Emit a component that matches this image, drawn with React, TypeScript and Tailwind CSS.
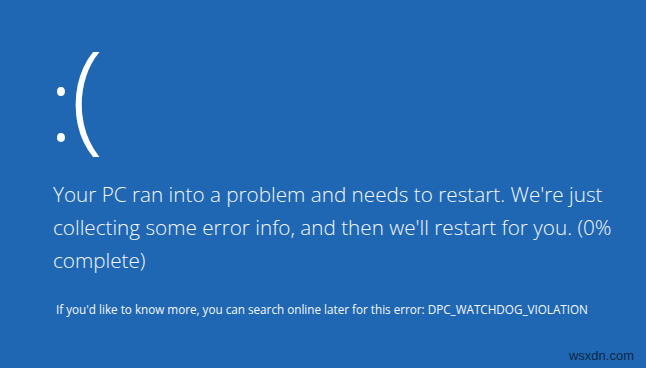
import React from "react";

const App = () => {
  return (
    <main className="relative h-[368px] w-[646px] overflow-hidden bg-[#2067b3] text-white">
      <div className="flex flex-col pl-[53px]">
        <div className="mt-[32px] flex h-[128px] items-center font-['Open_Sans',sans-serif] font-light leading-none">
          <span className="-ml-[4px] mt-[12px] text-[100px]">:</span>
          <span className="-ml-[2px] -mt-[8px] text-[120px]">(</span>
        </div>
        <p className="mt-[18px] font-['Open_Sans',sans-serif] text-[20.7px] font-light leading-[33px] text-[#f4f7fb]">
          <span className="block whitespace-nowrap">Your PC ran into a problem and needs to restart. We're just</span>
          <span className="block whitespace-nowrap">collecting some error info, and then we'll restart for you. (0%</span>
          <span className="block whitespace-nowrap">complete)</span>
        </p>
        <p className="mt-[24px] pl-[3px] font-['Open_Sans',sans-serif] text-[11.7px] leading-[16px] whitespace-nowrap text-[#f4f7fb]">
          If you'd like to know more, you can search online later for this error: DPC_WATCHDOG_VIOLATION
        </p>
      </div>
      <span className="absolute right-[12px] bottom-[3px] font-['Liberation_Sans',sans-serif] text-[13px] text-[#0d2747]">
        wsxdn.com
      </span>
    </main>
  );
};

export default App;
